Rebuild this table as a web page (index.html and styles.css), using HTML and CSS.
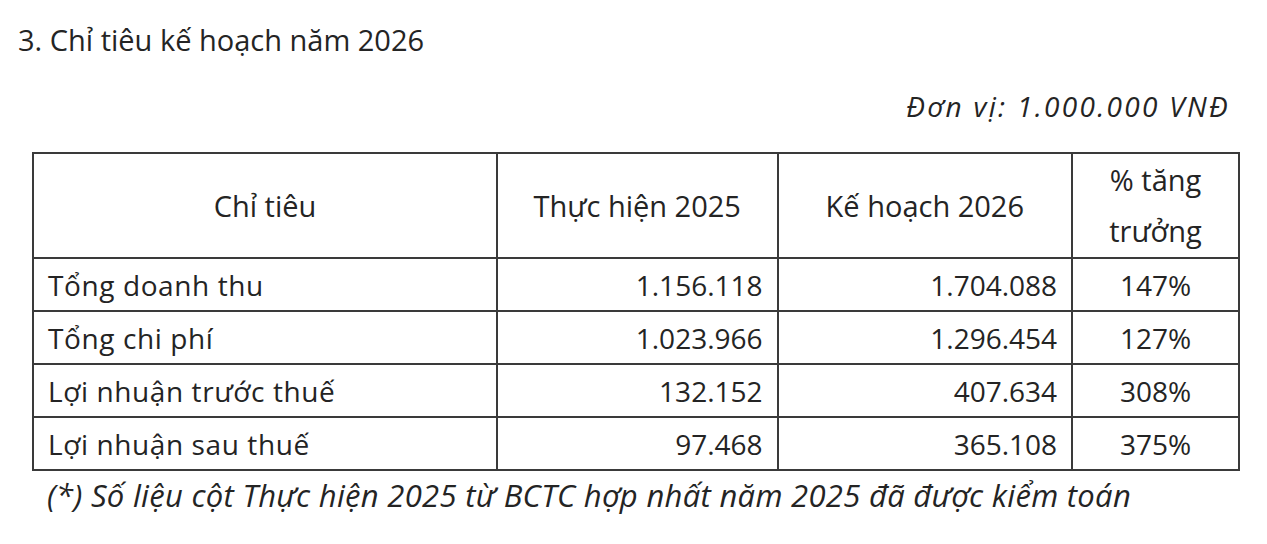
FILE: index.html
```html
<!DOCTYPE html>
<html lang="vi">
<head>
<meta charset="utf-8">
<link rel="stylesheet" href="styles.css">
</head>
<body>
<div class="page">
  <h1 class="title">3. Chỉ tiêu kế hoạch năm 2026</h1>
  <div class="unit">Đơn vị: 1.000.000 VNĐ</div>
  <table class="plan">
    <colgroup>
      <col class="c1"><col class="c2"><col class="c3"><col class="c4">
    </colgroup>
    <thead>
      <tr>
        <th>Chỉ tiêu</th>
        <th>Thực hiện 2025</th>
        <th>Kế hoạch 2026</th>
        <th class="pct-h">% tăng<br>trưởng</th>
      </tr>
    </thead>
    <tbody>
      <tr><td class="name">Tổng doanh thu</td><td class="num">1.156.118</td><td class="num">1.704.088</td><td class="pct">147%</td></tr>
      <tr><td class="name">Tổng chi phí</td><td class="num">1.023.966</td><td class="num">1.296.454</td><td class="pct">127%</td></tr>
      <tr><td class="name">Lợi nhuận trước thuế</td><td class="num">132.152</td><td class="num">407.634</td><td class="pct">308%</td></tr>
      <tr><td class="name">Lợi nhuận sau thuế</td><td class="num">97.468</td><td class="num">365.108</td><td class="pct">375%</td></tr>
    </tbody>
  </table>
  <p class="note">(*) Số liệu cột Thực hiện 2025 từ BCTC hợp nhất năm 2025 đã được kiểm toán</p>
</div>
</body>
</html>
```

FILE: styles.css
```css
html, body {
  margin: 0;
  padding: 0;
  background: #ffffff;
}
body {
  font-family: "Open Sans", "Noto Sans", sans-serif;
  color: #242424;
}
.page {
  padding: 20px 27px 0 18px;
}
.title {
  margin: 0;
  font-size: 29px;
  font-weight: 500;
  line-height: 40px;
  letter-spacing: 0px;
}
.unit {
  margin: 26px 0 0 0;
  text-align: right;
  font-style: italic;
  font-size: 28px;
  line-height: 40px;
  letter-spacing: 2.3px;
  padding-right: 10px;
}
.plan {
  margin: 26px 0 0 14px;
  width: 1208px;
  border-collapse: collapse;
  font-size: 28px;
}
.c1 { width: 465px; }
.c2 { width: 281px; }
.c3 { width: 295px; }
.c4 { width: 167px; }
.plan th, .plan td {
  border: 2px solid #3a3a3a;
  padding: 0 14px;
}
.plan th {
  font-weight: 400;
  font-size: 29px;
  height: 103px;
  line-height: 50px;
  padding-top: 0;
  padding-bottom: 0;
}
.plan th.pct-h {
  line-height: 51px;
  vertical-align: top;
}
.plan td {
  height: 51px;
  line-height: 50px;
}
.num { text-align: right; }
.pct, .pct-h { text-align: center; }
.name { letter-spacing: 0.6px; }
.note {
  margin: 4px 0 0 29px;
  font-style: italic;
  font-size: 31px;
  line-height: 40px;
  letter-spacing: 0.3px;
}
```
